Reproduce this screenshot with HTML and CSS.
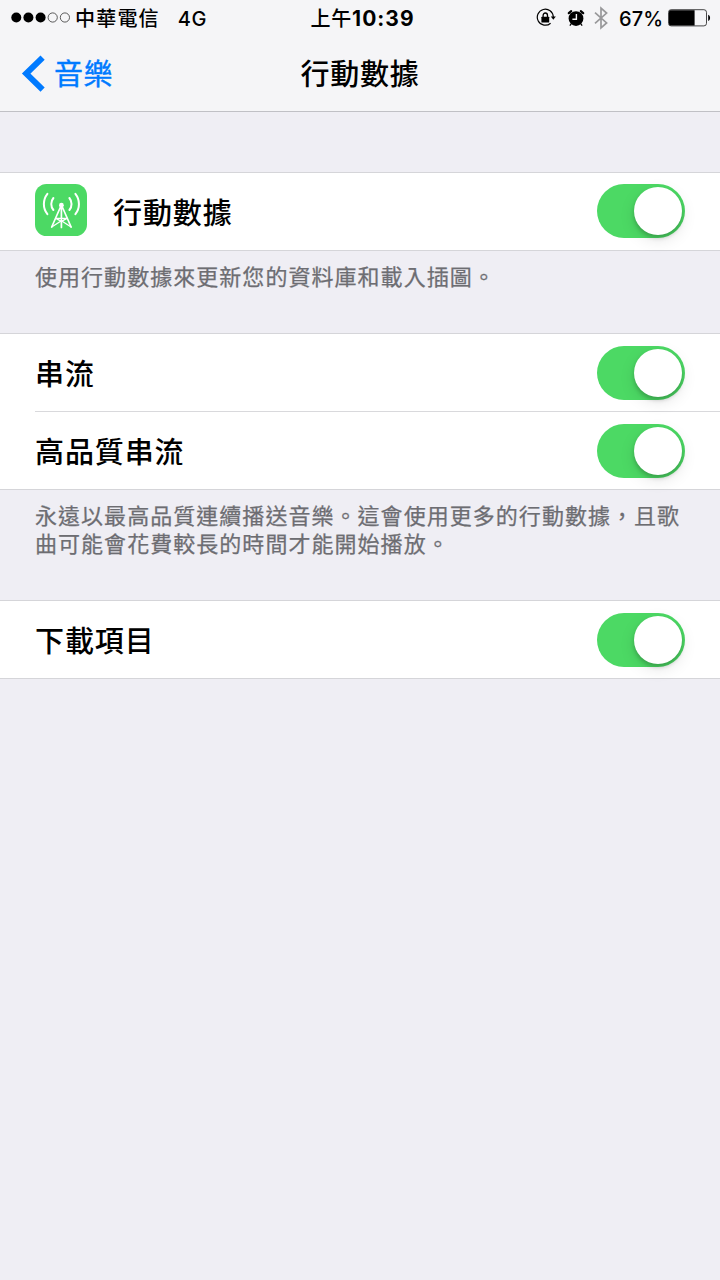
FILE: index.html
```html
<!DOCTYPE html>
<html lang="zh-Hant">
<head>
  <meta charset="UTF-8">
  <meta name="viewport" content="width=device-width, initial-scale=1.0">
  <title>行動數據</title>
  <link rel="stylesheet" href="styles.css">
</head>
<body>
  <header>
    <div class="status">
      <div class="status-left">
        <svg class="signal" width="60" height="12" viewBox="0 0 60 12">
          <circle cx="5.3" cy="5.5" r="5"/>
          <circle cx="17.4" cy="5.5" r="5"/>
          <circle cx="29.6" cy="5.5" r="5"/>
          <circle class="empty" cx="41.7" cy="5.5" r="4.6"/>
          <circle class="empty" cx="53.9" cy="5.5" r="4.6"/>
        </svg>
        <span class="carrier">中華電信</span>
        <span class="network">4G</span>
      </div>
      <div class="clock"><span>上午</span><b>10:39</b></div>
      <div class="status-right">
        <svg class="lock" width="20" height="20" viewBox="0 0 20 20">
          <path d="M14.6 15.2A8 8 0 1 1 17.3 9" fill="none" stroke="#000" stroke-width="1.2"/>
          <path d="M14.8 8.6h5L17.3 11.8z"/>
          <rect x="5.4" y="8.7" width="7.8" height="5.8" rx=".6"/>
          <path d="M7.1 9V7.4a2.2 2.4 0 0 1 4.4 0V9" fill="none" stroke="#000" stroke-width="1.3"/>
        </svg>
        <svg class="alarm" width="18" height="18" viewBox="0 0 18 18">
          <circle cx="9" cy="9.6" r="7.4"/>
          <path d="M1.8 4.2L4.2 2.2M13.8 2.2l2.4 2" fill="none" stroke="#000" stroke-width="2.2" stroke-linecap="round"/>
          <path d="M4 15.2l-.8 1M14 15.2l.8 1" fill="none" stroke="#000" stroke-width="1.3" stroke-linecap="round"/>
          <path d="M9.4 5v5.2H5.4" fill="none" stroke="#f5f5f7" stroke-width="1.4"/>
        </svg>
        <svg class="bluetooth" width="14" height="24" viewBox="0 0 14 24">
          <path d="M1 6.7l11.6 10.2L7 21.8V2.2l5.6 4.9L1 17.3" fill="none" stroke="#98989a" stroke-width="1.7"/>
        </svg>
        <span class="percent">67%</span>
        <svg class="battery" width="43" height="18" viewBox="0 0 43 18">
          <rect x=".5" y=".7" width="38" height="16.2" rx="2.6" fill="none" stroke="#333" stroke-width=".9"/>
          <path d="M3 1.2h23.6v15.2H3A1.8 1.8 0 0 1 1 14.4V3.2A1.8 1.8 0 0 1 3 1.2z"/>
          <path d="M40.2 5.8c2.5 1 2.5 5.2 0 6.2z"/>
        </svg>
      </div>
    </div>
    <nav>
      <a class="back">
        <svg width="24" height="38" viewBox="0 0 24 38">
          <path d="M21.6 2.6L5.2 18.6l16.4 16" fill="none" stroke="#007aff" stroke-width="6"/>
        </svg>
        <span>音樂</span>
      </a>
      <h1>行動數據</h1>
    </nav>
  </header>

  <main>
    <section class="group">
      <div class="row">
        <svg class="app-icon" width="52" height="52" viewBox="0 0 52 52">
          <rect width="52" height="52" rx="11.5" fill="#4cd964"/>
          <g fill="none" stroke="#fff" stroke-width="2" stroke-linecap="round" stroke-linejoin="round">
            <path d="M12.4 9.8a16.5 16.5 0 0 0 0 20.4M40.4 9.8a16.5 16.5 0 0 1 0 20.4"/>
            <path d="M18.4 14a9.5 9.5 0 0 0 0 12M34.4 14a9.5 9.5 0 0 1 0 12"/>
            <path d="M25.7 22.5l-9 20.5M27.1 22.5l9 20.5M26.4 21v22.5" stroke-width="1.7"/>
            <path d="M20.8 34.4h11.2M16.7 43l9.7-6.2 9.7 6.2M20.8 34.4l5.6 2.9 5.6-2.9" stroke-width="1.3"/>
          </g>
          <circle cx="26.4" cy="21.2" r="2.4" fill="#fff"/>
        </svg>
        <span class="label">行動數據</span>
        <div class="switch"></div>
      </div>
    </section>
    <p class="note">使用行動數據來更新您的資料庫和載入插圖。</p>

    <section class="group">
      <div class="row">
        <span class="label">串流</span>
        <div class="switch"></div>
      </div>
      <div class="row">
        <span class="label">高品質串流</span>
        <div class="switch"></div>
      </div>
    </section>
    <p class="note note-long">永遠以最高品質連續播送音樂。這會使用更多的行動數據，且歌曲可能會花費較長的時間才能開始播放。</p>

    <section class="group">
      <div class="row">
        <span class="label">下載項目</span>
        <div class="switch"></div>
      </div>
    </section>
  </main>
</body>
</html>
```
FILE: styles.css
```css
* {
  box-sizing: border-box;
}
body {
  margin: 0;
  min-height: 1280px;
  background: #efeef4;
  color: #000;
  font-family: Inter, "Noto Sans CJK TC", sans-serif;
}
svg {
  display: block;
  flex: none;
}
header {
  height: 112px;
  background: #f5f5f7;
  border-bottom: 1px solid #c0c0c5;
}

/* status bar */
.status {
  display: grid;
  grid-template-columns: 1fr auto 1fr;
  height: 36px;
  padding: 0 9px 0 11px;
  font-size: 20px;
  font-weight: 500;
  line-height: 34px;
  white-space: nowrap;
}
.status span,
.status b {
  padding-top: 2px;
}
.status-left,
.status-right,
.clock {
  display: flex;
  align-items: center;
}
.status-right {
  justify-content: flex-end;
}
.signal .empty {
  fill: none;
  stroke: #333;
  stroke-width: .8;
}
.carrier {
  margin-left: 4px;
  letter-spacing: 1.2px;
}
.network {
  margin-left: 18px;
  letter-spacing: .6px;
}
.clock {
  padding-left: 3px;
}
.clock span {
  letter-spacing: .8px;
}
.clock b {
  font-weight: 700;
  font-size: 21px;
  letter-spacing: 1px;
}
.lock {
  margin-right: 11px;
}
.alarm {
  margin-right: 9px;
}
.bluetooth {
  margin-right: 11px;
}
.percent {
  margin-right: 5px;
}

/* title bar */
nav {
  display: grid;
  grid-template-columns: 1fr auto 1fr;
  align-items: center;
  height: 75px;
  padding: 0 21px;
}
.back {
  display: flex;
  align-items: center;
  gap: 9px;
  color: #007aff;
  font-size: 29px;
  line-height: 40px;
  letter-spacing: .5px;
}
.back span {
  padding-top: 2px;
  -webkit-text-stroke: .4px #007aff;
}
h1 {
  margin: 0;
  padding-top: 2px;
  font-size: 29px;
  font-weight: 500;
  line-height: 40px;
  letter-spacing: .8px;
}

/* settings groups */
main {
  padding-top: 60px;
}
.group {
  background: #fff;
  border-top: 1px solid #d5d5d9;
  border-bottom: 1px solid #d5d5d9;
}
.row {
  display: flex;
  align-items: center;
  height: 77px;
  padding-right: 35px;
  margin-left: 35px;
}
.row + .row {
  height: 78px;
  border-top: 1px solid #d9d9dc;
}
.app-icon {
  margin: 0 26px 3px 0;
}
.label {
  flex: 1;
  padding-top: 4px;
  font-size: 29px;
  font-weight: 500;
  line-height: 40px;
  letter-spacing: .9px;
}
.switch {
  width: 88.5px;
  height: 54px;
  padding: 3px;
  border-radius: 27px;
  background: #4cd964;
}
.app-icon ~ .switch {
  margin-bottom: 1px;
}
.switch::after {
  content: "";
  display: block;
  width: 48px;
  height: 48px;
  margin-left: auto;
  border-radius: 50%;
  background: #fff;
  box-shadow: 0 3px 4px rgba(0,0,0,.2), 0 5px 16px rgba(0,0,0,.1);
}
.note {
  height: 82px;
  margin: 0;
  padding: 12px 35px 0;
  color: #6d6d72;
  font-size: 22px;
  line-height: 28px;
  letter-spacing: 1.04px;
  -webkit-text-stroke: .25px #6d6d72;
}
.note-long {
  height: 110px;
  padding-right: 30px;
}
```
